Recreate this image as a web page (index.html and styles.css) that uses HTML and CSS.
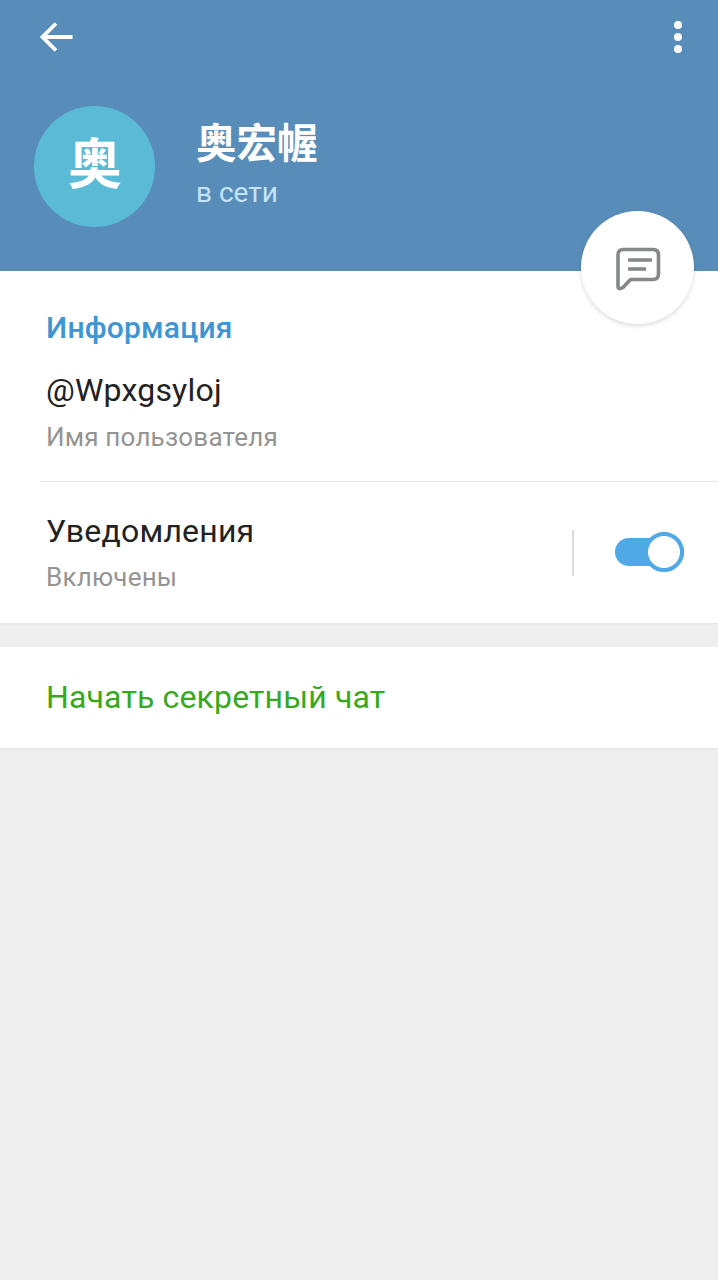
FILE: index.html
```html
<!DOCTYPE html>
<html lang="ru">
<head>
<meta charset="utf-8">
<title>Профиль</title>
<link rel="stylesheet" href="styles.css">
</head>
<body>
<div class="screen">
  <header class="header">
    <div class="topbar">
      <svg class="back" width="36" height="34" viewBox="0 0 36 34"><path d="M34.500 17H5M18 3.500 4.500 17 18 30.500" fill="none" stroke="#fff" stroke-width="3.800"/></svg>
      <div class="dots"><span></span><span></span><span></span></div>
    </div>
    <div class="profile">
      <div class="avatar">奥</div>
      <div class="who">
        <div class="name">奥宏幄</div>
        <div class="status">в сети</div>
      </div>
    </div>
    <button class="fab">
      <svg width="46" height="46" viewBox="0 0 46 46"><path d="M8 4.500H38Q43.500 4.500 43.500 10V29Q43.500 34.500 38 34.500H15.500L8 42.500Q3 45.500 3 41V10Q3 4.500 8 4.500Z" fill="none" stroke="#858789" stroke-width="3.600" stroke-linejoin="round"/><path d="M13 15H37M13 24H31" fill="none" stroke="#858789" stroke-width="3.400"/></svg>
    </button>
  </header>
  <section class="card info">
    <h2 class="section-title">Информация</h2>
    <div class="row row-user">
      <div class="primary">@Wpxgsyloj</div>
      <div class="secondary">Имя пользователя</div>
    </div>
    <div class="row row-notify">
      <div>
        <div class="primary">Уведомления</div>
        <div class="secondary">Включены</div>
      </div>
      <div class="notify-side">
        <span class="vline"></span>
        <span class="switch"><span class="knob"></span></span>
      </div>
    </div>
  </section>
  <section class="card secret">
    <div class="secret-text">Начать секретный чат</div>
  </section>
</div>
</body>
</html>
```

FILE: styles.css
```css
* { box-sizing: border-box; }
html, body { margin: 0; padding: 0; }
body { background: #eeeeee; font-family: Roboto, "Noto Sans CJK SC", sans-serif; }
.screen { width: 718px; height: 1280px; overflow: hidden; background: #eeeeee; }

.header { position: relative; height: 271px; background: #598db9; }
.topbar { display: flex; justify-content: space-between; padding: 20px 36px 0 38px; height: 106px; }
.back { display: block; }
.dots { display: flex; flex-direction: column; gap: 4px; padding-top: 1px; }
.dots span { width: 8px; height: 8px; border-radius: 50%; background: #fff; }
.profile { display: flex; align-items: center; padding-left: 34px; gap: 41px; }
.avatar { width: 121px; height: 121px; border-radius: 50%; background: #5bbad5; color: #fff; font-size: 54px; font-weight: 700; line-height: 119px; text-align: center; padding-left: 1px; }
.who { margin-top: -2px; }
.name { color: #fff; font-size: 40.500px; line-height: 50px; font-weight: 700; }
.status { color: #c4e3f7; font-size: 28px; line-height: 38px; margin-top: 5px; }
.fab { position: absolute; left: 581px; top: 211px; width: 113px; height: 113px; border: 0; border-radius: 50%; background: #fff; box-shadow: 0 2px 4px rgba(0,0,0,.14); display: flex; align-items: center; justify-content: center; padding: 0; }

.card { background: #fff; box-shadow: 0 1px 2px rgba(0,0,0,.05); }
.info { height: 352px; padding-top: 38px; }
.section-title { margin: 0; padding-left: 46px; color: #3d95d3; font-size: 30px; line-height: 38px; font-weight: 500; letter-spacing: .2px; }
.row { padding-left: 46px; }
.row-user { height: 135px; padding-top: 23px; position: relative; }
.row-user::after { content: ""; position: absolute; left: 40px; right: 0; bottom: 0; height: 1px; background: #e8e8e8; }
.row-notify { display: flex; justify-content: space-between; padding-top: 29px; }
.row-notify .secondary { margin-top: 9px; }
.primary { color: #222222; font-size: 32px; line-height: 40px; letter-spacing: .2px; }
.secondary { color: #949494; font-size: 26px; line-height: 34px; margin-top: 10px; letter-spacing: .2px; }
.notify-side { display: flex; align-items: center; height: 46px; margin-top: 19px; margin-right: 34px; gap: 41px; }
.vline { width: 2px; height: 46px; background: #dcdcdc; margin-left: 1px; }
.switch { position: relative; width: 69px; height: 28px; border-radius: 14px; background: #4ea9e6; margin-top: -2px; }
.knob { position: absolute; right: 0; top: -6px; width: 40px; height: 40px; border-radius: 50%; background: #fff; border: 4px solid #4ea9e6; }

.secret { height: 101px; margin-top: 24px; padding: 30px 0 0 46px; }
.secret-text { color: #36a91f; font-size: 32px; line-height: 40px; letter-spacing: .15px; }
```
